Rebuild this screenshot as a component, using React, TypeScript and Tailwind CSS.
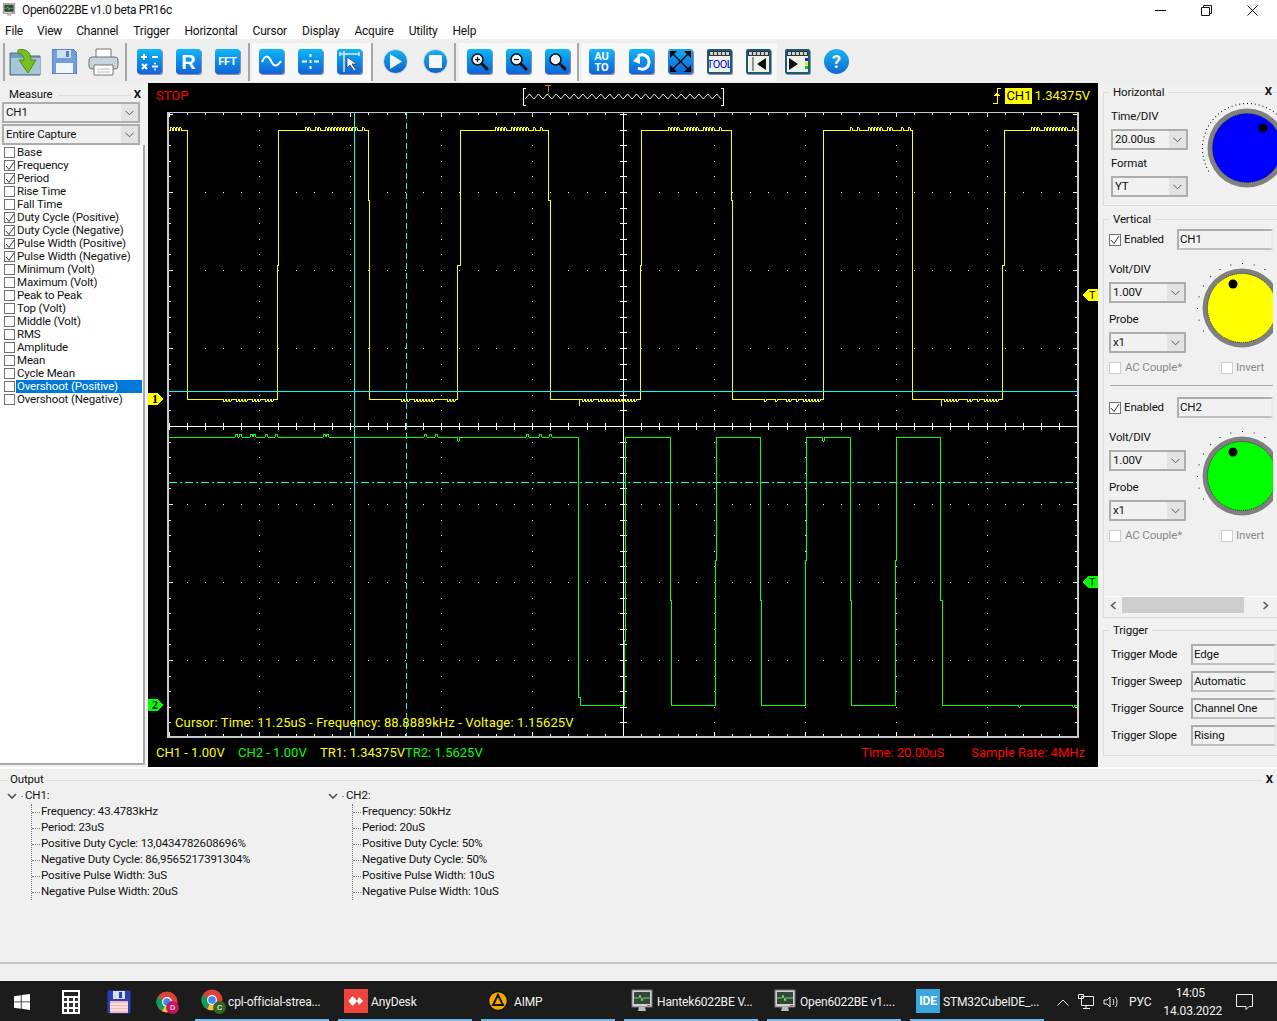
import React from 'react';

const measures: [string, boolean][] = [
  ['Base', false], ['Frequency', true], ['Period', true], ['Rise Time', false], ['Fall Time', false],
  ['Duty Cycle (Positive)', true], ['Duty Cycle (Negative)', true], ['Pulse Width (Positive)', true],
  ['Pulse Width (Negative)', true], ['Minimum (Volt)', false], ['Maximum (Volt)', false], ['Peak to Peak', false],
  ['Top (Volt)', false], ['Middle (Volt)', false], ['RMS', false], ['Amplitude', false], ['Mean', false],
  ['Cycle Mean', false], ['Overshoot (Positive)', false], ['Overshoot (Negative)', false],
];

const menu = ['File', 'View', 'Channel', 'Trigger', 'Horizontal', 'Cursor', 'Display', 'Acquire', 'Utility', 'Help'];

const rnd = (x: number, seed: number) => {
  const v = Math.sin(x * 12.9898 + seed) * 43758.5453;
  return v - Math.floor(v);
};

// little bumps on the flat parts of the yellow trace
const noisy = (x0: number, x1: number, base: number, amp: number, from: number) => {
  const pts: string[] = [`${x0},${base}`];
  const s = amp > 0 ? 1 : -1;
  let x = x0 + from;
  while (x < x1 - 3) {
    if (rnd(x, x0) > 0.25) {
      pts.push(`${x},${base}`, `${x},${base + amp - s}`, `${x + 1},${base + amp}`, `${x + 2},${base + amp - s}`, `${x + 2},${base}`);
      x += 3;
    } else {
      x += 4;
    }
  }
  pts.push(`${x1},${base}`);
  return pts;
};

const yellowPoints = () => {
  const hi = 130;
  const lo = 399;
  const segs: [number, number, boolean][] = [
    [169, 187, true], [187, 277, false], [278, 368, true], [369, 457, false], [460, 548, true], [550, 640, false],
    [641, 731, true], [732, 823, false], [823, 912, true], [912, 1002, false], [1004, 1077, true],
  ];
  const pts: string[] = [];
  segs.forEach(([a, b, up], i) => {
    if (i > 0 && a > segs[i - 1][1]) {
      const mid = up ? 265 : 200;
      pts.push(`${segs[i - 1][1]},${mid}`, `${a},${mid}`);
    }
    pts.push(...(up ? noisy(a, b, hi, -3, a === 169 ? 1 : 27) : noisy(a, b, lo, 3, 32)));
  });
  return pts.join(' ');
};

const bump = (x: number, y: number, d: number) => [`${x - 1},${y}`, `${x},${y + d}`, `${x + 1},${y + d}`, `${x + 2},${y}`];

// vertical edge with a one pixel jog half way
const edge = (x0: number, y0: number, x1: number, y1: number, mid: number) => [`${x0},${y0}`, `${x0},${mid}`, `${x1},${mid}`, `${x1},${y1}`];

const greenPoints = () => {
  const hi = 437;
  const lo = 705;
  const marks: [number, number][] = [
    [236, -3], [240, -3], [251, -3], [254, -3], [266, -3], [276, -3], [324, -3], [327, -3], [425, -3], [436, -3], [458, 4], [527, -3], [540, -3], [550, -3],
  ];
  const pts: string[] = [`169,${hi}`];
  marks.forEach(([x, d]) => pts.push(...bump(x, hi, d)));
  pts.push(...edge(578, hi, 580, lo, 697));
  pts.push(...edge(624, lo, 625, hi, 640));
  pts.push(...edge(670, hi, 671, lo, 600));
  pts.push(...edge(715, lo, 716, hi, 560));
  pts.push(...edge(760, hi, 761, lo, 600));
  pts.push(...edge(805, lo, 806, hi, 560));
  pts.push(...bump(823, hi, 4));
  pts.push(...edge(850, hi, 851, lo, 600));
  pts.push(...edge(895, lo, 896, hi, 560));
  pts.push(...edge(940, hi, 942, lo, 600));
  pts.push(...bump(1019, lo, 2), ...bump(1073, lo, 2));
  pts.push(`1077,${lo}`);
  return pts.join(' ');
};

const range = (n: number) => Array.from({ length: n }, (_, i) => i);

const Plot = () => {
  const majorX = range(11).map((i) => 168.5 + i * 90.9);
  const minorX = range(51).map((i) => 168.5 + i * 18.18);
  const minorY = range(41).map((i) => 114 + i * 15.6);
  const majorY = range(9).map((i) => 114 + i * 78);
  return (
    <svg width="950" height="626" viewBox="148 112 950 626" shapeRendering="crispEdges" className="block">
      {/* grid dots */}
      {majorX.slice(1, 10).map((x) => minorY.map((y) => <rect key={`${x}-${y}`} x={Math.round(x)} y={Math.round(y)} width="1" height="1" fill="#fff" />))}
      {majorY.slice(1, 8).map((y) => minorX.map((x) => <rect key={`r${x}-${y}`} x={Math.round(x)} y={Math.round(y)} width="1" height="1" fill="#fff" />))}
      {/* frame ticks */}
      {minorX.map((x, i) => (
        <g key={`t${i}`} stroke="#fff">
          <line x1={Math.round(x)} x2={Math.round(x)} y1="113" y2={i % 5 === 0 ? 117 : 115} />
          <line x1={Math.round(x)} x2={Math.round(x)} y1={i % 5 === 0 ? 732 : 734} y2="736" />
          <line x1={Math.round(x)} x2={Math.round(x)} y1="423" y2="430" />
        </g>
      ))}
      {minorY.map((y, i) => (
        <g key={`l${i}`} stroke="#fff">
          <line x1="169" x2={i % 5 === 0 ? 173 : 171} y1={Math.round(y)} y2={Math.round(y)} />
          <line x1={i % 5 === 0 ? 1073 : 1075} x2="1077" y1={Math.round(y)} y2={Math.round(y)} />
          <line x1="620" x2="627" y1={Math.round(y)} y2={Math.round(y)} />
        </g>
      ))}
      <line x1="169" x2="1077" y1="426.5" y2="426.5" stroke="#fff" />
      <line x1="623.5" x2="623.5" y1="113" y2="736" stroke="#fff" />
      <polyline points={yellowPoints()} fill="none" stroke="#ffff00" />
      <line x1="579.5" x2="579.5" y1="399" y2="406" stroke="#ffff00" />
      <line x1="941.5" x2="941.5" y1="399" y2="406" stroke="#ffff00" />
      <polyline points={greenPoints()} fill="none" stroke="#00ff00" />
      <line x1="169" x2="1077" y1="391.5" y2="391.5" stroke="#00ffff" />
      <line x1="169" x2="1077" y1="482.5" y2="482.5" stroke="#00ffff" strokeDasharray="8 3 2 3" />
      <line x1="354.5" x2="354.5" y1="113" y2="736" stroke="#00ffff" />
      <line x1="406.5" x2="406.5" y1="113" y2="736" stroke="#00ffff" strokeDasharray="6 4" />
      <rect x="168" y="112" width="910" height="625" fill="none" stroke="#c8c8c8" strokeWidth="2" />
      {/* channel and trigger markers */}
      <polygon points="148,393 157,393 163,399 157,405 148,405" fill="#ffff00" />
      <text x="152" y="403" fontSize="12" fontWeight="700" fontFamily="'Liberation Serif',serif" fill="#000">1</text>
      <polygon points="148,699 157,699 163,705 157,711 148,711" fill="#00ff00" />
      <text x="152" y="709" fontSize="12" fontWeight="700" fontFamily="'Liberation Serif',serif" fill="#000">2</text>
      <polygon points="1098,289 1088,289 1083,295 1088,301 1098,301" fill="#ffff00" />
      <text x="1089" y="299" fontSize="11" fontFamily="Roboto,sans-serif" fill="#000">T</text>
      <polygon points="1098,576 1088,576 1083,582 1088,588 1098,588" fill="#00ff00" />
      <text x="1089" y="586" fontSize="11" fontFamily="Roboto,sans-serif" fill="#000">T</text>
    </svg>
  );
};

const TriggerBar = () => {
  const zig = range(45).map((i) => `${525 + i * 4.46},${i % 2 ? 94 : 99}`).join(' ');
  return (
    <svg width="204" height="24" viewBox="522 84 204 24" className="block" shapeRendering="crispEdges">
      <path d="M526 88.5H523.5V105.5H526M721 88.5H723.5V105.5H721" fill="none" stroke="#fff" />
      <polyline points={zig} fill="none" stroke="#e8e8e8" shapeRendering="auto" />
      <path d="M545 85.5H551M548 85.5V92" stroke="#d08000" />
      <line x1="548" x2="548" y1="93" y2="96" stroke="#00d000" />
    </svg>
  );
};

const Check = ({ on, off, small }: { on?: boolean; off?: boolean; small?: boolean }) => (
  <span className={`shrink-0 border bg-white flex items-center justify-center ${small ? 'w-[11px] h-[11px] ml-[1px]' : 'w-[12px] h-[12px]'} ${off ? 'border-[#cccccc]' : 'border-[#707070]'}`}>
    {on && (
      <svg width="10" height="10" viewBox="0 0 10 10" className="shrink-0">
        <path d="M1 5l3 3.5 5-7.5" fill="none" stroke="#333" strokeWidth="1" />
      </svg>
    )}
  </span>
);

const Chev = () => (
  <svg width="9" height="6" viewBox="0 0 9 6">
    <path d="M.5 .8L4.5 4.8L8.5 .8" fill="none" stroke="#555" />
  </svg>
);

const Combo = ({ value, className }: { value: string; className: string }) => (
  <div className={`h-[21px] flex border-2 border-[#adadad] bg-[#f1f1f1] items-stretch ${className}`}>
    <span className="flex-1 pl-[2px] flex items-center leading-none">{value}</span>
    <span className="w-[17px] bg-[#e3e3e3] flex items-center justify-center"><Chev /></span>
  </div>
);

const Field = ({ value, className }: { value: string; className: string }) => (
  <div className={`h-[21px] border-2 border-[#adadad] border-r-[#e8e8e8] border-b-[#c0c0c0] bg-[#f1f1f1] pl-[1px] flex items-center ${className}`}>{value}</div>
);

const Knob = ({ color, dotX, dotY, w }: { color: string; dotX: number; dotY: number; w: number }) => (
  <svg width={w} height="92" viewBox={`0 0 ${w} 92`} className="block shrink-0">
    {range(48).map((i) => {
      const a = (-150 + i * 5) * (Math.PI / 180);
      if (i % 3 !== 0 && color !== '#0000ff') return null;
      return <rect key={i} x={46 + 45 * Math.sin(a + Math.PI / 6)} y={46 - 45 * Math.cos(a + Math.PI / 6)} width="1" height="1" fill="#000" />;
    })}
    <circle cx="46" cy="46" r="39.5" fill="#808080" />
    <circle cx="46" cy="46" r="34.5" fill={color} stroke="#000" strokeWidth="0.6" strokeDasharray="1 1" />
    <circle cx={dotX} cy={dotY} r="4.5" fill="#000" />
  </svg>
);

const ChannelBlock = ({ name, color }: { name: string; color: string }) => (
  <div className="pl-[5px]">
    <div className="flex items-center h-[21px]">
      <Check on />
      <span className="ml-[3px] w-[41px]">Enabled</span>
      <div className="ml-[12px] w-[96px]"><Field value={name} className="w-full" /></div>
    </div>
    <div className="flex mt-[12px]">
      <div className="w-[78px] shrink-0">
        <div className="h-[15px] leading-[15px]">Volt/DIV</div>
        <Combo value="1.00V" className="w-[77px] mt-[5px]" />
        <div className="h-[15px] leading-[15px] mt-[9px]">Probe</div>
        <Combo value="x1" className="w-[77px] mt-[5px]" />
      </div>
      <div className="ml-[9px]"><Knob color={color} dotX={37} dotY={22} w={77} /></div>
    </div>
    <div className="flex items-center h-[14px] mt-[7px] text-[#8a8a8a]">
      <Check off />
      <span className="ml-[4px] w-[96px]">AC Couple*</span>
      <Check off />
      <span className="ml-[3px]">Invert</span>
    </div>
  </div>
);

const RightPanel = () => (
  <aside className="w-[179px] shrink-0 overflow-hidden pt-[2px] pl-[5px]">
    <fieldset className="relative w-[172px] h-[121px] border border-[#dcdcdc] border-r-0 pl-[7px]">
      <legend className="-ml-[2px] px-[4px] leading-[15px]">Horizontal</legend>
      <span className="absolute right-[9px] -top-[17px] font-bold">X</span>
      <div className="flex">
        <div className="w-[78px] shrink-0 pt-[9px]">
          <div className="h-[15px] leading-[15px]">Time/DIV</div>
          <Combo value="20.00us" className="w-[77px] mt-[5px]" />
          <div className="h-[15px] leading-[15px] mt-[6px]">Format</div>
          <Combo value="YT" className="w-[77px] mt-[5px]" />
        </div>
        <div className="ml-[12px] mt-[2px]"><Knob color="#0000ff" dotX={62} dotY={26} w={80} /></div>
      </div>
    </fieldset>
    <fieldset className="w-[172px] h-[406px] mt-[6px] border border-[#dcdcdc] border-r-0 pt-[2px]">
      <legend className="ml-[5px] px-[4px] leading-[15px]">Vertical</legend>
      <ChannelBlock name="CH1" color="#ffff00" />
      <div className="h-px w-[163px] bg-[#a8a8a8] ml-[6px] mt-[10px] mb-[11px]" />
      <ChannelBlock name="CH2" color="#00ff00" />
      <div className="mt-[53px] ml-[1px] h-[17px] border-t border-white flex items-center bg-[#f0f0f0]">
        <span className="w-[17px] flex justify-center"><svg width="7" height="9" viewBox="0 0 7 9"><path d="M5.5 1L1.5 4.500L5.500 8" fill="none" stroke="#555" strokeWidth="1.5" /></svg></span>
        <span className="w-[122px] h-[16px] bg-[#cdcdcd]" />
        <span className="w-[42px] flex justify-center"><svg width="7" height="9" viewBox="0 0 7 9"><path d="M1.500 1L5.500 4.500L1.500 8" fill="none" stroke="#555" strokeWidth="1.5" /></svg></span>
      </div>
    </fieldset>
    <fieldset className="w-[174px] h-[133px] mt-[5px] border border-[#dcdcdc] border-r-0 pl-[7px]">
      <legend className="-ml-[2px] px-[4px] leading-[15px]">Trigger</legend>
      <div className="flex flex-col gap-[6px] pt-[6px]">
        {[['Trigger Mode', 'Edge'], ['Trigger Sweep', 'Automatic'], ['Trigger Source', 'Channel One'], ['Trigger Slope', 'Rising']].map(([label, value]) => (
          <div key={label} className="flex items-center">
            <span className="w-[80px]">{label}</span>
            <Field value={value} className="w-[85px]" />
          </div>
        ))}
      </div>
    </fieldset>
  </aside>
);

const LeftPanel = () => (
  <aside className="w-[148px] shrink-0 pl-[2px] pr-[3px] flex flex-col">
    <div className="flex items-center h-[19px] pt-[5px]">
      <span className="ml-[7px] mr-[5px]">Measure</span>
      <span className="flex-1 h-px bg-[#dcdcdc]" />
      <span className="font-bold ml-[3px] mr-[4px]">X</span>
    </div>
    <Combo value="CH1" className="w-[138px]" />
    <Combo value="Entire Capture" className="w-[138px] mt-[1px]" />
    <div className="h-[620px] bg-white border-r-2 border-b-2 border-[#a8a8a8] -ml-[2px] pt-[1px] pr-[1px]">
      {measures.map(([label, on]) => (
        <div key={label} className="flex items-center h-[13px] pl-[3px]">
          <Check on={on} small />
          <span className={`ml-[1px] pl-[1px] flex-1 h-[13px] leading-[13px] ${label === 'Overshoot (Positive)' ? 'bg-[#0078d7] text-white' : ''}`}>{label}</span>
        </div>
      ))}
    </div>
  </aside>
);

const Scope = () => (
  <main className="relative w-[950px] shrink-0 bg-black text-[13px] tracking-normal flex flex-col">
    <div className="h-[29px] flex items-center pb-[3px]">
      <span className="w-[374px] pl-[8px] text-[#ff0000]">STOP</span>
      <TriggerBar />
      <div className="ml-auto mr-[8px] flex items-center text-[#ffff00]">
        <svg width="10" height="18" viewBox="0 0 10 18" className="mr-[3px]" shapeRendering="crispEdges">
          <path d="M9 1H5V16H1M2 8H8M3 7H7M4 6H6" fill="none" stroke="#ffff00" />
        </svg>
        <span className="bg-[#ffff00] text-black px-[1px] leading-[16px] mr-[2px]">CH1</span>
        <span>1.34375V</span>
      </div>
    </div>
    <Plot />
    <div className="absolute left-[27px] top-[630px] text-[#ffff00] tracking-[0.14px]">Cursor: Time: 11.25uS - Frequency: 88.8889kHz - Voltage: 1.15625V</div>
    <div className="flex-1 flex items-center pl-[8px] pr-[13px]">
      <span className="w-[82px] text-[#ffff00]">CH1 - 1.00V</span>
      <span className="w-[82px] text-[#00ff00]">CH2 - 1.00V</span>
      <span className="text-[#ffff00]">TR1: 1.34375V</span>
      <span className="text-[#00ff00]">TR2: 1.5625V</span>
      <span className="ml-auto text-[#ff0000]">Time: 20.00uS</span>
      <span className="ml-[27px] text-[#ff0000]">Sample Rate: 4MHz</span>
    </div>
  </main>
);

const TreeCol = ({ name, rows, className }: { name: string; rows: string[]; className: string }) => (
  <div className={`shrink-0 ${className}`}>
    <div className="flex items-center h-[16px]">
      <svg width="10" height="7" viewBox="0 0 10 7" className="ml-[1px]"><path d="M1 1L5 5L9 1" fill="none" stroke="#555" strokeWidth="1.600" /></svg>
      <span className="w-[2px] h-px bg-[#999] ml-[4px] mr-[2px]" />
      <span>{name}</span>
    </div>
    <div className="ml-[25px] border-l border-dotted border-[#777] mb-[8px]">
      {rows.map((r) => (
        <div key={r} className="flex items-center h-[16px]">
          <span className="w-[8px] border-t border-dotted border-[#777] mr-[1px]" />
          <span>{r}</span>
        </div>
      ))}
    </div>
  </div>
);

const OutputPanel = () => (
  <section className="h-[195px] shrink-0 border-t-2 border-[#fbfbfb] flex flex-col">
    <div className="flex items-center h-[16px] mt-[3px]">
      <span className="w-[9px] h-px bg-[#dcdcdc] ml-0" />
      <span className="mx-[1px]">Output</span>
      <span className="flex-1 h-px bg-[#dcdcdc]" />
      <span className="font-bold mx-[4px]">X</span>
    </div>
    <div className="flex pl-[6px]">
      <TreeCol
        name="CH1:"
        className="w-[321px]"
        rows={['Frequency: 43.4783kHz', 'Period: 23uS', 'Positive Duty Cycle: 13,0434782608696%', 'Negative Duty Cycle: 86,9565217391304%', 'Positive Pulse Width: 3uS', 'Negative Pulse Width: 20uS']}
      />
      <TreeCol
        name="CH2:"
        className="w-[300px]"
        rows={['Frequency: 50kHz', 'Period: 20uS', 'Positive Duty Cycle: 50%', 'Negative Duty Cycle: 50%', 'Positive Pulse Width: 10uS', 'Negative Pulse Width: 10uS']}
      />
    </div>
  </section>
);

const Blue = ({ children, className = '' }: { children?: React.ReactNode; className?: string }) => (
  <div className={`w-[25px] h-[25px] rounded-[3px] bg-linear-to-b from-[#12b6f7] to-[#1462d6] shadow-[1px_1px_0_#8b8ba8] flex items-center justify-center text-white font-bold leading-none ${className}`}>
    {children}
  </div>
);

const Round = ({ children }: { children: React.ReactNode }) => (
  <div className="w-[25px] h-[25px] rounded-full bg-linear-to-b from-[#19b3ee] to-[#1260c4] border border-[#cfd8e6] flex items-center justify-center">{children}</div>
);

const Lens = ({ mark }: { mark?: 'plus' | 'minus' }) => (
  <svg width="21" height="21" viewBox="0 0 21 21">
    <path d="M12 12l6 6" stroke="#111" strokeWidth="3" strokeLinecap="round" />
    <circle cx="8.500" cy="8.500" r="5.500" fill="#f4f8fc" stroke="#111" strokeWidth="1.500" />
    {mark && <path d="M6 8.500h5" stroke="#111" strokeWidth="1.200" />}
    {mark === 'plus' && <path d="M8.500 6v5" stroke="#111" strokeWidth="1.200" />}
  </svg>
);

const Win = ({ children, side }: { children: React.ReactNode; side?: boolean }) => (
  <div className="w-[25px] h-[25px] rounded-[2px] border-2 border-[#1d5a78] bg-[#eef3ea] flex flex-col shadow-[1px_1px_0_#9090a0] overflow-hidden">
    <div className="h-[5px] bg-[#333] flex gap-[1px] px-[1px] py-[1px] shrink-0">
      {range(5).map((i) => <span key={i} className="flex-1 bg-[#cfcfcf]" />)}
    </div>
    <div className="flex-1 flex items-center justify-center relative">
      {children}
      {side && (
        <span className="absolute right-0 top-[2px] w-[3px] h-[13px] flex flex-col gap-[1px]">
          <span className="h-[3px] bg-[#2020e0]" /><span className="h-[3px] bg-[#e8e800]" /><span className="h-[3px] bg-[#00d000]" />
        </span>
      )}
    </div>
  </div>
);

const Sep = () => <span className="w-[2px] h-[38px] bg-[#a6a6a6] shrink-0" />;

const Toolbar = () => (
  <div className="h-[44px] shrink-0 bg-[#eeeeee] flex items-center pl-[3px] pt-[1px]">
    <Sep />
    <div className="w-[120px] h-[38px] flex items-center pl-[4px] shrink-0">
      <svg width="33" height="30" viewBox="0 0 33 30">
        <path d="M1 6h10l2 3h18v19H1z" fill="#6f9fbe" stroke="#4a7088" />
        <path d="M2 11h29v16H2z" fill="#a7c6d8" />
        <path d="M9 3c8-2 13 2 13 10h5l-8 13-9-13h5c0-5-3-7-6-6z" fill="#78c020" stroke="#4b8a10" />
      </svg>
      <svg width="25" height="25" viewBox="0 0 25 25" className="ml-[10px]">
        <path d="M0 0h21l4 4v21H0z" fill="#6f9fdc" stroke="#4f6fa8" />
        <path d="M5 1h14v8H5z" fill="#cfdff2" />
        <path d="M14 2h3v6h-3z" fill="#5a7fb8" />
        <path d="M4 14h17v10H4z" fill="#f2f6fb" />
      </svg>
      <svg width="31" height="28" viewBox="0 0 31 28" className="ml-[11px]">
        <path d="M8 1h15v9H8z" fill="#ffffff" stroke="#777" />
        <rect x="1" y="9" width="29" height="12" rx="3" fill="#c9d3da" stroke="#6a757e" />
        <path d="M6 17h19v10H6z" fill="#fff" stroke="#777" />
        <path d="M9 21h13M9 24h13" stroke="#bbb" />
      </svg>
    </div>
    <Sep />
    <div className="w-[121px] h-[38px] pl-[10px] flex items-center gap-[14px] shrink-0">
      <Blue>
        <svg width="21" height="21" viewBox="0 0 21 21"><path d="M2 6h6M5 3v6M13 6h6M3 13l5 5M8 13l-5 5M13 15.500h6" stroke="#fff" strokeWidth="2" /><circle cx="16" cy="12.500" r="1" fill="#fff" /><circle cx="16" cy="18.500" r="1" fill="#fff" /></svg>
      </Blue>
      <Blue className="text-[20px] [font-family:'Liberation_Sans',sans-serif]">R</Blue>
      <Blue className="text-[11px]">FFT</Blue>
    </div>
    <Sep />
    <div className="ml-[2px] w-[119px] h-[38px] bg-[#f8f8f8] pl-[7px] flex items-center gap-[14px] shrink-0">
      <Blue><svg width="21" height="21" viewBox="0 0 21 21"><path d="M1 11c3-7 6-7 9-1s6 6 10 0" fill="none" stroke="#fff" strokeWidth="2" /></svg></Blue>
      <Blue><svg width="21" height="21" viewBox="0 0 21 21"><path d="M10.500 3v3M10.500 9v3M10.500 15v3M2 10.500h5M14 10.500h5" stroke="#fff" strokeWidth="2" /></svg></Blue>
      <Blue><svg width="23" height="23" viewBox="0 0 23 23"><path d="M2 4h19M6 1v21M2 2v4M21 2v4" stroke="#dfeaf6" strokeWidth="1.500" fill="none" /><path d="M9 7v11l3-3 4 6 2-1-4-6h5z" fill="#fff" stroke="#333" strokeWidth="0.700" /></svg></Blue>
    </div>
    <Sep />
    <div className="w-[81px] h-[38px] flex items-center shrink-0 pl-[10px] gap-[15px]">
      <Round><svg width="13" height="15" viewBox="0 0 13 15"><path d="M1 0l12 7.500L1 15z" fill="#f4f8fc" /></svg></Round>
      <Round><span className="w-[13px] h-[13px] bg-[#f4f8fc] rounded-[1px]" /></Round>
    </div>
    <Sep />
    <div className="ml-[3px] w-[118px] h-[38px] bg-[#f8f8f8] pl-[8px] flex items-center gap-[14px] shrink-0">
      <Blue><Lens mark="plus" /></Blue>
      <Blue><Lens mark="minus" /></Blue>
      <Blue><Lens /></Blue>
    </div>
    <Sep />
    <div className="ml-[3px] w-[195px] h-[38px] bg-[#f8f8f8] pl-[7px] flex items-center gap-[14px] shrink-0">
      <Blue className="text-[11px] text-center">AU<br />TO</Blue>
      <Blue className="ml-[1px]">
        <svg width="21" height="21" viewBox="0 0 21 21"><path d="M7 5c5-3 11 0 11 6s-6 9-11 6" fill="none" stroke="#fff" strokeWidth="3" /><path d="M2 10l7-7v10z" fill="#fff" /></svg>
      </Blue>
      <Blue className="from-[#18a8ec] to-[#1a7ad8]">
        <svg width="25" height="25" viewBox="0 0 25 25"><path d="M5 5l15 15M20 5L5 20" stroke="#000" strokeWidth="1.300" /><path d="M2 2h7L2 9zM23 2h-7l7 7zM2 23h7l-7-7zM23 23h-7l7-7z" fill="#000" /></svg>
      </Blue>
      <Win><span className="text-[#0000d0] text-[11px] leading-none tracking-[-0.5px]">TOOL</span></Win>
      <Win><svg width="19" height="14" viewBox="0 0 19 14"><path d="M4 0v14" stroke="#333" /><path d="M8 7l9-6v12z" fill="#111" /></svg></Win>
    </div>
    <div className="ml-[8px]"><Win side><svg width="19" height="14" viewBox="0 0 19 14"><path d="M1 1l9 6-9 6z" fill="#111" /></svg></Win></div>
    <div className="ml-[14px] w-[25px] h-[25px] rounded-full bg-linear-to-b from-[#1cb4f2] to-[#1468d0] text-white font-bold text-[18px] leading-none flex items-center justify-center">?</div>
  </div>
);

const Monitor = ({ small }: { small?: boolean }) => (
  <svg width={small ? 14 : 22} height={small ? 14 : 24} viewBox="0 0 22 24" className="shrink-0">
    <rect x="1" y="1" width="20" height="17" fill="#d0d0d0" stroke="#777" />
    <rect x="3" y="3" width="16" height="12" fill="#2f4a3c" />
    <path d="M3 9h5l1-3 2 6 1-3h7" fill="none" stroke="#7ed060" />
    <path d="M8 18h6l1 4H7z" fill="#bbb" />
    <rect x="16" y="16" width="3" height="1" fill="#e04040" />
  </svg>
);

const Chrome = ({ badge, bg }: { badge: string; bg: string }) => (
  <span className="relative w-[24px] h-[24px] shrink-0">
    <svg width="22" height="22" viewBox="0 0 22 22" className="block">
      <circle cx="11" cy="11" r="10.500" fill="#db4437" />
      <path d="M11 11L20 16A10.500 10.500 0 0 1 6 20z" fill="#fbc02d" />
      <path d="M11 11L6 20A10.500 10.500 0 0 1 1.500 6z" fill="#0f9d58" />
      <circle cx="11" cy="11" r="5" fill="#fff" />
      <circle cx="11" cy="11" r="3.800" fill="#4285f4" />
    </svg>
    <span className={`absolute -right-[1px] -bottom-[1px] w-[13px] h-[13px] rounded-full text-[8px] leading-[13px] text-center text-white ${bg}`}>{badge}</span>
  </span>
);

const TaskBtn = ({ icon, label }: { icon: React.ReactNode; label: string }) => (
  <div className="w-[134px] h-[40px] shrink-0 border-y-2 border-t-transparent border-b-[#76b9ed] flex items-center pl-[6px] gap-[3px] whitespace-nowrap overflow-hidden">
    <span className="w-[24px] flex justify-center shrink-0">{icon}</span>
    <span className="pt-[1px]">{label}</span>
  </div>
);

const Taskbar = () => (
  <footer className="h-[40px] shrink-0 bg-[#1c1c1c] text-[#f2f2f2] text-[12px] flex items-center">
    <div className="w-[195px] flex items-center shrink-0 pt-[2px]">
      <svg width="16" height="16" viewBox="0 0 16 16" className="ml-[14px]"><path d="M0 2.200l6.800-1v6.300H0zM7.600 1l8.400-1v7.500H7.600zM0 8.300h6.800v6.400l-6.800-1zM7.600 8.300H16V16l-8.400-1.200z" fill="#fff" /></svg>
      <div className="ml-[32px] w-[18px] h-[24px] bg-white p-[2px] flex flex-col gap-[2px]">
        <span className="h-[4px] bg-[#222]" />
        <div className="grid grid-cols-3 gap-[2px] flex-1">{range(9).map((i) => <span key={i} className="bg-[#333]" />)}</div>
      </div>
      <svg width="24" height="24" viewBox="0 0 24 24" className="ml-[27px]">
        <rect x="0.500" y="0.500" width="23" height="23" rx="1" fill="#2a40b8" />
        <rect x="6" y="1" width="12" height="8" fill="#d8dce8" />
        <rect x="12" y="2" width="3" height="6" fill="#2a40b8" />
        <rect x="3" y="11" width="18" height="12" fill="#f4b8b8" />
        <path d="M3 14h18M3 17h18M3 20h18" stroke="#fff" />
      </svg>
      <span className="ml-[25px]"><Chrome badge="D" bg="bg-[#c2185b]" /></span>
    </div>
    <div className="flex gap-[9px]">
      <TaskBtn icon={<Chrome badge="C" bg="bg-[#33691e]" />} label="cpl-official-strea..." />
      <TaskBtn icon={<span className="w-[24px] h-[24px] bg-[#ef443b] flex items-center justify-center"><svg width="16" height="12" viewBox="0 0 16 12"><path d="M4.500 1l5 5-5 5-4-5zM11 2l4 4-4 4-2-4z" fill="#fff" /></svg></span>} label="AnyDesk" />
      <div className="w-[134px] h-[40px] shrink-0 border-y-2 border-t-transparent border-b-[#76b9ed] flex items-center pl-[7px] gap-[5px]">
        <svg width="20" height="20" viewBox="0 0 20 20" className="shrink-0"><circle cx="10" cy="10" r="9.500" fill="#f5a800" stroke="#111" strokeWidth="1.500" /><path d="M10 4l5 10H5z" fill="none" stroke="#111" strokeWidth="2" /></svg>
        <span className="ml-[1px] pt-[1px]">AIMP</span>
      </div>
      <TaskBtn icon={<Monitor />} label="Hantek6022BE V..." />
      <TaskBtn icon={<Monitor />} label="Open6022BE v1...." />
      <TaskBtn icon={<span className="w-[24px] h-[24px] bg-[#3aa7de] text-white font-bold text-[12px] leading-[24px] text-center">IDE</span>} label="STM32CubeIDE_..." />
    </div>
    <div className="flex items-center ml-[9px] flex-1 pt-[2px]">
      <svg width="12" height="7" viewBox="0 0 12 7" className="ml-[4px]"><path d="M.5 6.500L6 1l5.500 5.500" fill="none" stroke="#eee" /></svg>
      <svg width="16" height="16" viewBox="0 0 16 16" className="ml-[9px]"><path d="M3.500 2.500h12v9h-12zM8 11.500v3M5 14.500h7M.5 .5h5v4h-5z" fill="none" stroke="#eee" /></svg>
      <svg width="16" height="14" viewBox="0 0 16 14" className="ml-[9px]"><path d="M1 5h3l3-3v10L4 9H1zM10 4c1 2 1 4 0 6M12.500 2c2 3 2 7 0 10" fill="none" stroke="#eee" /></svg>
      <span className="ml-[10px]">РУС</span>
      <div className="ml-[12px] w-[54px] text-center leading-[18px]">
        <div>14:05</div>
        <div>14.03.2022</div>
      </div>
      <svg width="17" height="17" viewBox="0 0 17 17" className="ml-[19px]"><path d="M.5 .5h16v12h-3.500l-3 3v-3h-9.500z" fill="none" stroke="#eee" /></svg>
    </div>
  </footer>
);

export default function App() {
  return (
    <div className="w-[1277px] h-[1021px] overflow-hidden flex flex-col bg-[#f0f0f0] text-[11.5px] tracking-[-0.15px] text-[#111] [font-family:Roboto,sans-serif]">
      <div className="h-[20px] shrink-0 bg-white flex items-center">
        <span className="ml-[2px]"><Monitor small /></span>
        <span className="ml-[6px] text-[12px] tracking-[-0.35px]">Open6022BE v1.0 beta PR16c</span>
        <div className="ml-auto flex items-center">
          <span className="w-[11px] h-px bg-black mr-[35px]" />
          <svg width="11" height="11" viewBox="0 0 11 11" className="mr-[35px]"><path d="M.5 2.500h8v8h-8zM2.500 2.500v-2h8v8h-2" fill="none" stroke="#111" /></svg>
          <svg width="11" height="11" viewBox="0 0 11 11" className="mr-[19px]"><path d="M.5 .5l10 10M10.500 .5l-10 10" stroke="#111" /></svg>
        </div>
      </div>
      <div className="h-[19px] shrink-0 bg-white flex items-center pl-[5px] pt-[2px] gap-[15px] text-[12px] tracking-[-0.2px]">
        {menu.map((m, i) => <span key={m} className={i < 2 ? '-mr-[1px]' : ''}>{m}</span>)}
      </div>
      <Toolbar />
      <div className="h-[684px] shrink-0 flex">
        <LeftPanel />
        <Scope />
        <RightPanel />
      </div>
      <OutputPanel />
      <div className="flex-1 border-t-2 border-[#c4c4c4]" />
      <Taskbar />
    </div>
  );
}
